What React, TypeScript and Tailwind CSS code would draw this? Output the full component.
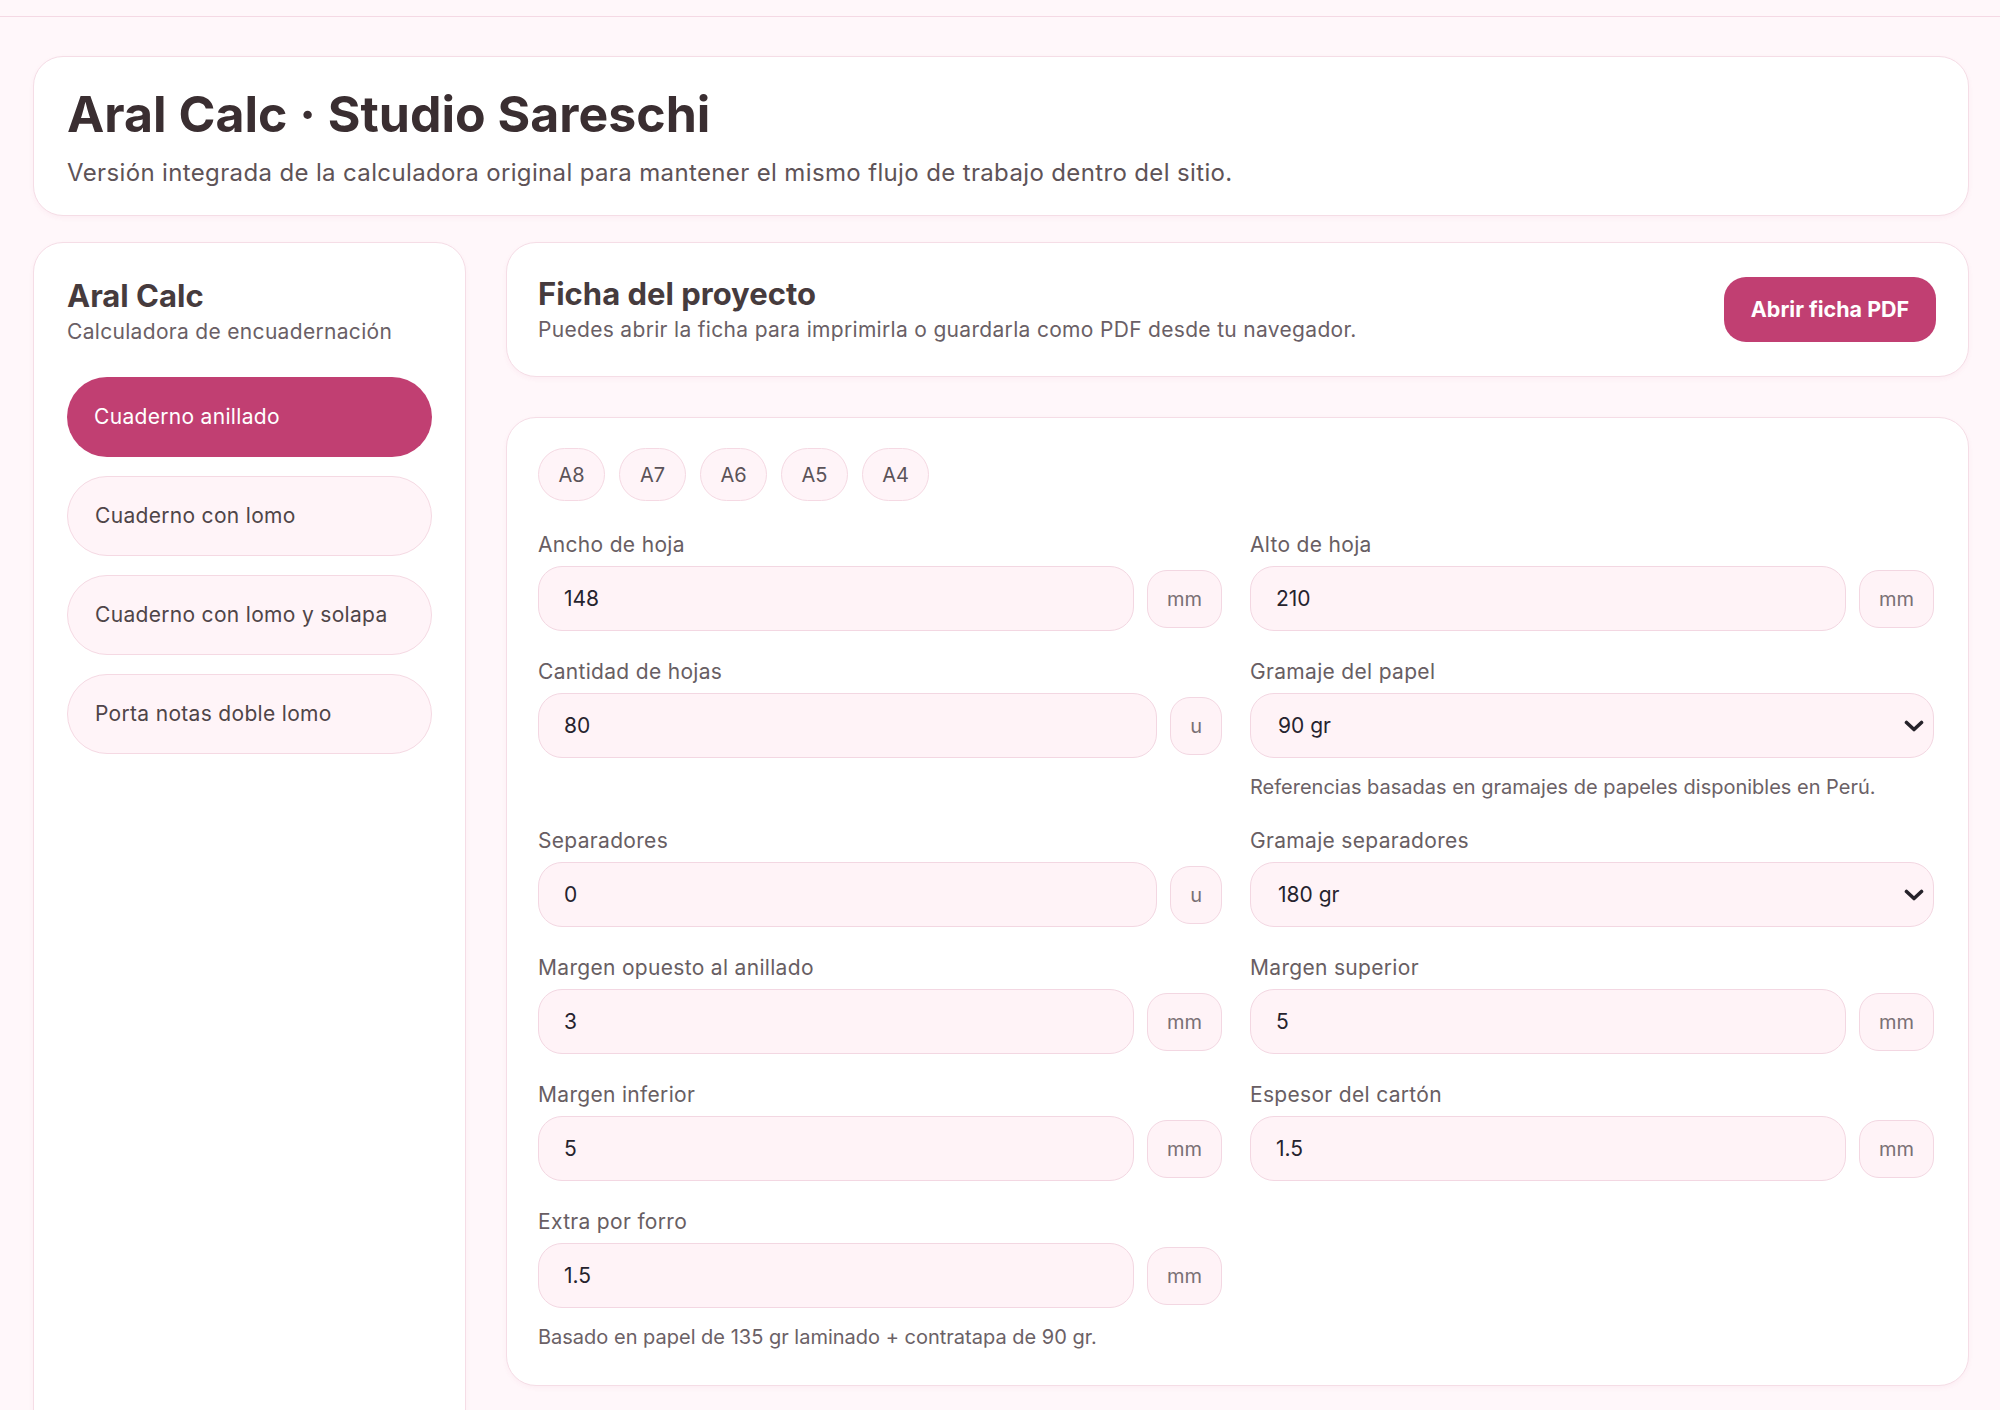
import { useState } from "react";

const modes = ["Cuaderno anillado", "Cuaderno con lomo", "Cuaderno con lomo y solapa", "Porta notas doble lomo"];
const sizes = ["A8", "A7", "A6", "A5", "A4"];

function Chevron() {
  return (
    <svg width="20" height="12" viewBox="0 0 20 12" className="pointer-events-none absolute right-[10px] top-1/2 -translate-y-1/2">
      <polyline points="2.5,2.5 10,9.5 17.5,2.5" fill="none" stroke="#26222a" strokeWidth="3.6" strokeLinecap="round" strokeLinejoin="round" />
    </svg>
  );
}

function Field({ label, value, unit }: { label: string; value: string; unit: string }) {
  const [v, setV] = useState(value);
  return (
    <div className="flex flex-col">
      <label className="mb-[8px] pt-[4px] text-[21px] leading-[26px] tracking-[0.015em] text-[#685e63]">{label}</label>
      <div className="flex items-center gap-[13px]">
        <input
          value={v}
          onChange={(e) => setV(e.target.value)}
          className="h-[65px] min-w-0 flex-1 rounded-[24px] border border-[#f3d7e2] bg-[#fff3f7] pl-[25px] text-[21px] text-[#26232e] outline-none"
        />
        <span className="flex h-[58px] items-center rounded-[20px] border border-[#f3d7e2] bg-[#fff3f7] px-[19px] text-[20px] text-[#7a7075]">
          {unit}
        </span>
      </div>
    </div>
  );
}

function SelectField({ label, value, options, note }: { label: string; value: string; options: string[]; note?: string }) {
  const [v, setV] = useState(value);
  return (
    <div className="flex flex-col">
      <label className="mb-[8px] pt-[4px] text-[21px] leading-[26px] tracking-[0.015em] text-[#685e63]">{label}</label>
      <div className="relative">
        <select
          value={v}
          onChange={(e) => setV(e.target.value)}
          className="h-[65px] w-full appearance-none rounded-[24px] border border-[#f3d7e2] bg-[#fff3f7] pl-[27px] text-[21px] text-[#26232e] outline-none"
        >
          {options.map((o) => (
            <option key={o}>{o}</option>
          ))}
        </select>
        <Chevron />
      </div>
      {note && <p className="mt-[16px] text-[20px] leading-[26px] text-[#6b6166]">{note}</p>}
    </div>
  );
}

export default function App() {
  const [mode, setMode] = useState(0);
  return (
    <div className="min-h-screen bg-[#fff7fa] font-['Inter',sans-serif] text-[#3a2f33]">
      <div className="h-[17px] border-b border-[#f5d9e4]" />
      <main className="pb-[40px] pl-[33px] pr-[31px] pt-[39px]">
        <header className="h-[160px] rounded-[30px] border border-[#f5dde6] bg-white px-[33px] pt-[27px] shadow-[0_2px_5px_rgba(193,63,114,0.05)]">
          <h1 className="text-[50px] font-bold leading-[60px] text-[#3a2e31]">Aral Calc · Studio Sareschi</h1>
          <p className="mt-[13px] text-[24px] leading-[32px] tracking-[0.015em] text-[#5e5357]">
            Versión integrada de la calculadora original para mantener el mismo flujo de trabajo dentro del sitio.
          </p>
        </header>

        <div className="mt-[26px] grid grid-cols-[433px_1fr] items-start gap-[40px]">
          <aside className="min-h-[1230px] rounded-[30px] border border-[#f5dde6] bg-white px-[33px] pt-[34px] shadow-[0_2px_5px_rgba(193,63,114,0.05)]">
            <h2 className="text-[31px] font-bold leading-[38px] text-[#463b3d]">Aral Calc</h2>
            <p className="mt-[3px] text-[21px] leading-[28px] tracking-[0.015em] text-[#6a5f66]">Calculadora de encuadernación</p>
            <nav className="mt-[31px] flex flex-col gap-[19px]">
              {modes.map((m, i) => (
                <button
                  key={m}
                  type="button"
                  onClick={() => setMode(i)}
                  className={
                    i === mode
                      ? "h-[80px] rounded-full bg-[#c13f72] pl-[27px] text-left text-[21px] tracking-[0.015em] text-white"
                      : "h-[80px] rounded-full border border-[#f5d9e3] bg-[#fff4f8] pl-[27px] text-left text-[21px] tracking-[0.015em] text-[#4f4548]"
                  }
                >
                  {m}
                </button>
              ))}
            </nav>
          </aside>

          <section className="flex flex-col gap-[40px]">
            <div className="flex h-[135px] items-center justify-between rounded-[30px] border border-[#f5dde6] bg-white pl-[31px] pr-[32px] shadow-[0_2px_5px_rgba(193,63,114,0.05)]">
              <div>
                <h2 className="text-[31px] font-bold leading-[38px] text-[#463b3d]">Ficha del proyecto</h2>
                <p className="mt-[3px] text-[21px] leading-[28px] tracking-[0.015em] text-[#6a5f66]">
                  Puedes abrir la ficha para imprimirla o guardarla como PDF desde tu navegador.
                </p>
              </div>
              <button type="button" className="h-[65px] w-[212px] rounded-[22px] bg-[#c13f72] text-[21.5px] font-bold text-white">
                Abrir ficha PDF
              </button>
            </div>

            <div className="rounded-[30px] border border-[#f5dde6] bg-white pb-[36px] pl-[31px] pr-[34px] pt-[30px] shadow-[0_2px_5px_rgba(193,63,114,0.05)]">
              <div className="flex gap-[14px]">
                {sizes.map((s) => (
                  <button
                    key={s}
                    type="button"
                    className="flex h-[53px] w-[67px] items-center justify-center rounded-full border border-[#f5d9e3] bg-[#fff4f8] text-[20px] text-[#5b5358]"
                  >
                    {s}
                  </button>
                ))}
              </div>

              <div className="mt-[27px] grid grid-cols-2 gap-x-[28px] gap-y-[24px]">
                <Field label="Ancho de hoja" value="148" unit="mm" />
                <Field label="Alto de hoja" value="210" unit="mm" />
                <div className="self-start">
                  <Field label="Cantidad de hojas" value="80" unit="u" />
                </div>
                <SelectField
                  label="Gramaje del papel"
                  value="90 gr"
                  options={["75 gr", "90 gr", "120 gr", "150 gr"]}
                  note="Referencias basadas en gramajes de papeles disponibles en Perú."
                />
                <Field label="Separadores" value="0" unit="u" />
                <SelectField label="Gramaje separadores" value="180 gr" options={["150 gr", "180 gr", "220 gr", "250 gr"]} />
                <Field label="Margen opuesto al anillado" value="3" unit="mm" />
                <Field label="Margen superior" value="5" unit="mm" />
                <Field label="Margen inferior" value="5" unit="mm" />
                <Field label="Espesor del cartón" value="1.5" unit="mm" />
                <div>
                  <Field label="Extra por forro" value="1.5" unit="mm" />
                  <p className="mt-[17px] text-[20px] leading-[24px] text-[#6b6166]">Basado en papel de 135 gr laminado + contratapa de 90 gr.</p>
                </div>
              </div>
            </div>
          </section>
        </div>
      </main>
    </div>
  );
}
